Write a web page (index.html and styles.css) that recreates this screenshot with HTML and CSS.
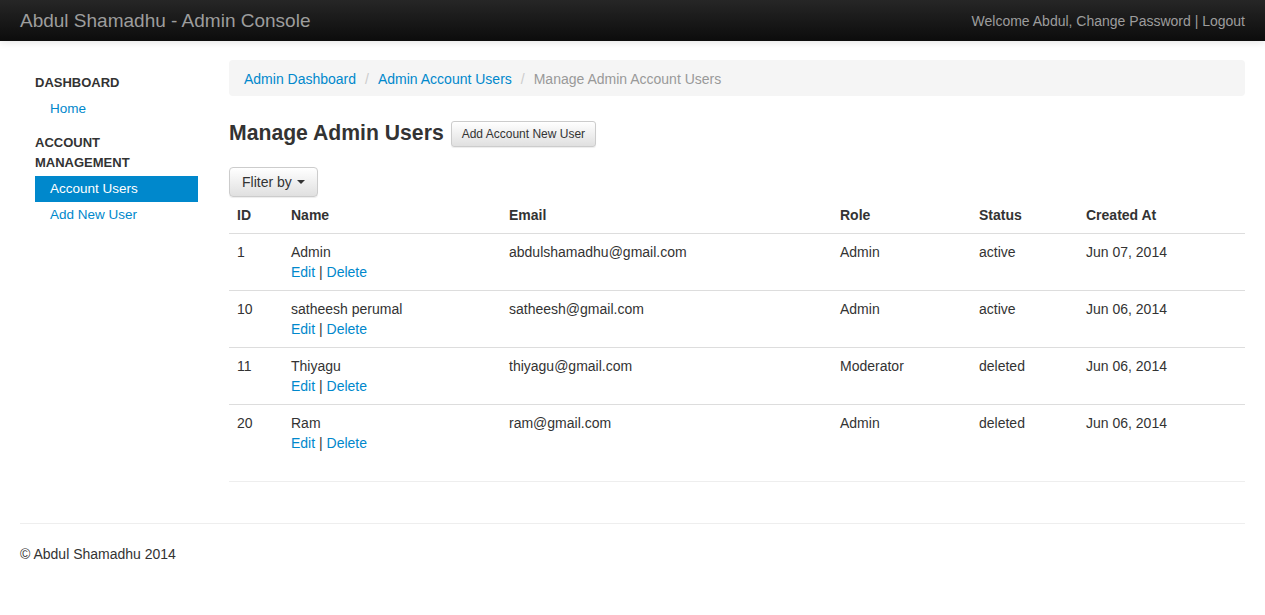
FILE: index.html
```html
<!DOCTYPE html>
<html>
<head>
<meta charset="utf-8">
<title>Admin Console</title>
<link rel="stylesheet" href="styles.css">
</head>
<body>
<header class="navbar">
  <span class="brand">Abdul Shamadhu - Admin Console</span>
  <span class="user-links">Welcome Abdul, Change Password | Logout</span>
</header>
<div class="page">
  <div class="layout">
    <aside class="sidebar">
      <ul class="nav">
        <li class="nav-header">Dashboard</li>
        <li><a href="#">Home</a></li>
        <li class="nav-header spaced">Account<br>Management</li>
        <li class="active"><a href="#">Account Users</a></li>
        <li><a href="#">Add New User</a></li>
      </ul>
    </aside>
    <main class="main">
      <ol class="breadcrumb">
        <li><a href="#">Admin Dashboard</a></li>
        <li class="sep">/</li>
        <li><a href="#">Admin Account Users</a></li>
        <li class="sep">/</li>
        <li class="current">Manage Admin Account Users</li>
      </ol>
      <div class="title-row">
        <h3 class="title">Manage Admin Users</h3>
        <button class="btn btn-sm">Add Account New User</button>
      </div>
      <button class="btn btn-filter">Fliter by <span class="caret"></span></button>
      <table class="table">
        <thead>
          <tr>
            <th class="c-id">ID</th>
            <th class="c-name">Name</th>
            <th class="c-email">Email</th>
            <th class="c-role">Role</th>
            <th class="c-status">Status</th>
            <th>Created At</th>
          </tr>
        </thead>
        <tbody>
          <tr>
            <td>1</td>
            <td>Admin<br><a href="#">Edit</a> | <a href="#">Delete</a></td>
            <td>abdulshamadhu@gmail.com</td>
            <td>Admin</td>
            <td>active</td>
            <td>Jun 07, 2014</td>
          </tr>
          <tr>
            <td>10</td>
            <td>satheesh perumal<br><a href="#">Edit</a> | <a href="#">Delete</a></td>
            <td>satheesh@gmail.com</td>
            <td>Admin</td>
            <td>active</td>
            <td>Jun 06, 2014</td>
          </tr>
          <tr>
            <td>11</td>
            <td>Thiyagu<br><a href="#">Edit</a> | <a href="#">Delete</a></td>
            <td>thiyagu@gmail.com</td>
            <td>Moderator</td>
            <td>deleted</td>
            <td>Jun 06, 2014</td>
          </tr>
          <tr>
            <td>20</td>
            <td>Ram<br><a href="#">Edit</a> | <a href="#">Delete</a></td>
            <td>ram@gmail.com</td>
            <td>Admin</td>
            <td>deleted</td>
            <td>Jun 06, 2014</td>
          </tr>
        </tbody>
      </table>
      <hr class="main-hr">
    </main>
  </div>
  <footer class="footer">
    <hr class="footer-hr">
    <p>© Abdul Shamadhu 2014</p>
  </footer>
</div>
</body>
</html>
```

FILE: styles.css
```css
* { box-sizing: border-box; }
html, body { margin: 0; padding: 0; }
body {
  font-family: "Liberation Sans", Arial, sans-serif;
  font-size: 14px;
  line-height: 20px;
  color: #333;
  background: #fff;
}
a { color: #0088cc; text-decoration: none; }

.navbar {
  height: 41px;
  display: flex;
  align-items: center;
  justify-content: space-between;
  padding: 0 20px;
  background: linear-gradient(to bottom, #262626 0%, #0c0c0c 100%);
  box-shadow: 0 1px 8px rgba(0,0,0,0.12);
}
.brand {
  font-size: 19px;
  color: #9d9d9d;
}
.user-links {
  color: #9d9d9d;
  font-size: 14px;
}

.page { padding: 19px 20px 0; }
.layout { display: flex; }
.sidebar {
  width: 209px;
  flex: none;
  padding-left: 15px;
  padding-right: 31px;
}
.nav { list-style: none; margin: 10px 0 0; padding: 0; }
.nav-header {
  padding: 3px 0;
  font-size: 13px;
  font-weight: bold;
  text-transform: uppercase;
  color: #333;
}
.nav-header.spaced { margin-top: 8px; }
.nav li a {
  display: block;
  padding: 3px 15px;
  line-height: 20px;
  font-size: 13.5px;
}
.nav li.active a {
  background: #0088cc;
  color: #fff;
}

.main { flex: 1; min-width: 0; }
.breadcrumb {
  list-style: none;
  margin: 0 0 20px;
  padding: 9px 15px 7px;
  background: #f5f5f5;
  border-radius: 4px;
  display: flex;
}
.breadcrumb .sep { color: #ccc; padding: 0 9px; }
.breadcrumb .current { color: #999; }

.title-row {
  display: flex;
  align-items: center;
  gap: 7px;
  padding: 3px 0 5px;
}
.title {
  margin: 0;
  font-size: 21.2px;
  line-height: 26px;
  font-weight: bold;
  color: #333;
}
.btn {
  font-family: "Liberation Sans", Arial, sans-serif;
  color: #333;
  background: linear-gradient(to bottom, #ffffff 0%, #e0e0e0 100%);
  border: 1px solid #ccc;
  border-radius: 4px;
  box-shadow: inset 0 1px 0 rgba(255,255,255,.15), 0 1px 1px rgba(0,0,0,.075);
  cursor: pointer;
}
.btn-sm {
  font-size: 12px;
  line-height: 18px;
  padding: 3px 10px;
  border-radius: 3px;
  margin-top: 2px;
}
.btn-filter {
  margin-top: 15px;
  font-size: 14px;
  line-height: 20px;
  padding: 4px 12px;
  height: 30px;
  display: flex;
  align-items: center;
  gap: 5px;
}
.caret {
  display: inline-block;
  width: 0;
  height: 0;
  border-top: 4px solid #333;
  border-left: 4px solid transparent;
  border-right: 4px solid transparent;
}

.table {
  width: 100%;
  border-collapse: collapse;
}
.table th, .table td {
  text-align: left;
  vertical-align: top;
  padding: 8px;
  line-height: 20px;
}
.table th { font-weight: bold; border-bottom: 1px solid #ddd; }
.table tbody tr + tr td { border-top: 1px solid #ddd; }
.c-id { width: 54px; }
.c-name { width: 218px; }
.c-email { width: 331px; }
.c-role { width: 139px; }
.c-status { width: 107px; }

.main-hr {
  border: 0;
  border-top: 1px solid #eee;
  margin: 20px 0;
}
.footer-hr {
  border: 0;
  border-top: 1px solid #eee;
  margin: 0 0 20px;
}
.footer { padding-top: 21px; }
.footer p { margin: 0 0 20px; }
```
